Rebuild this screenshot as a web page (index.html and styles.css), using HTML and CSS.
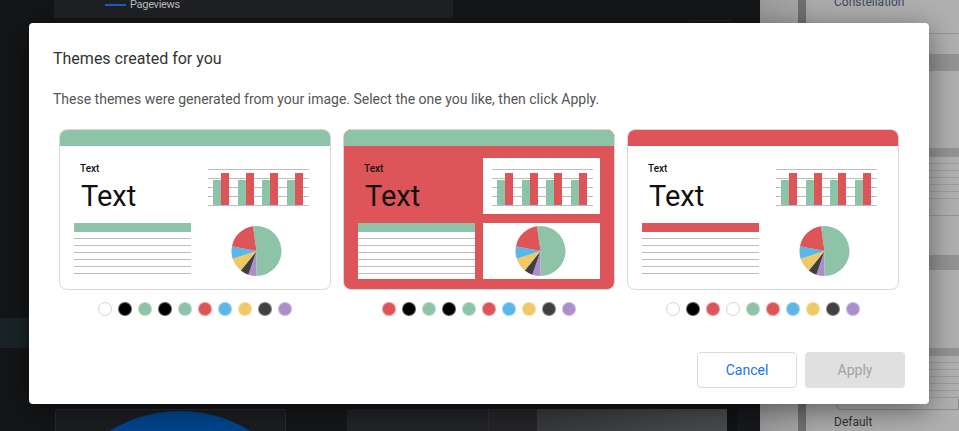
FILE: index.html
```html
<!DOCTYPE html>
<html>
<head>
  <title>Themes created for you</title>
  <link rel="stylesheet" href="styles.css">
</head>
<body>
  <div class="app">
    <div class="rail">
      <div class="rail-stripe"></div>
    </div>

    <div class="canvas">
      <div class="top-row">
        <div class="chart-panel">
          <span class="legend-line"></span>
          <span class="legend-text">Pageviews</span>
        </div>
        <div class="chart-gap">
          <div class="ghost-box"></div>
        </div>
      </div>
      <div class="bottom-row">
        <div class="map-panel">
          <div class="map-circle"></div>
        </div>
        <div class="blk blk-dark"></div>
        <div class="blk blk-a"></div>
        <div class="blk blk-b"></div>
        <div class="blk blk-c"></div>
        <div class="blk blk-d"></div>
        <div class="blk blk-e"></div>
      </div>
    </div>

    <div class="side-panel">
      <div class="side-stripe"></div>
      <div class="props">
        <div class="prop-label">Constellation</div>
        <div class="prop-rule r1"></div>
        <div class="prop-band b1"></div>
        <div class="prop-band b2"></div>
        <div class="prop-lines"></div>
        <div class="prop-rule r2"></div>
        <div class="prop-band b3"></div>
        <div class="prop-band b4"></div>
        <div class="prop-lines"></div>
        <div class="prop-box"></div>
        <div class="prop-label prop-default">Default</div>
      </div>
    </div>
  </div>

  <div class="dialog">
    <h2 class="dialog-title">Themes created for you</h2>
    <p class="dialog-text">These themes were generated from your image. Select the one you like, then click Apply.</p>

    <div class="themes">
      <!-- theme 1 -->
      <div class="theme">
        <div class="card">
          <div class="card-head green"></div>
          <div class="card-body">
            <div class="cell cell-title">
              <span class="t-small">Text</span>
              <span class="t-big">Text</span>
            </div>
            <div class="cell cell-chart">
              <svg width="117" height="56" viewBox="0 0 117 56">
                <g class="grid">
                  <rect x="9" y="11" width="101" height="1"/>
                  <rect x="9" y="20" width="101" height="1"/>
                  <rect x="9" y="29" width="101" height="1"/>
                  <rect x="9" y="38" width="101" height="1"/>
                  <rect x="9" y="47" width="101" height="1"/>
                </g>
                <g class="bars-a">
                  <rect x="14" y="22" width="8" height="25"/>
                  <rect x="39" y="22" width="8" height="25"/>
                  <rect x="63" y="22" width="8" height="25"/>
                  <rect x="88" y="22" width="8" height="25"/>
                </g>
                <g class="bars-b">
                  <rect x="22" y="15" width="8" height="32"/>
                  <rect x="47" y="15" width="8" height="32"/>
                  <rect x="71" y="15" width="8" height="32"/>
                  <rect x="96" y="15" width="8" height="32"/>
                </g>
              </svg>
            </div>
            <div class="cell cell-table">
              <div class="table-head green"></div>
              <div class="table-lines"></div>
            </div>
            <div class="cell cell-pie">
              <svg width="117" height="56" viewBox="0 0 117 56">
                <path class="s-green" d="M57.5 28 L54.02 3.24 A25 25 0 1 1 57.5 53 Z"/>
                <path class="s-purple" d="M57.5 28 L57.5 53 A25 25 0 0 1 49.36 51.64 Z"/>
                <path class="s-dark" d="M57.5 28 L49.36 51.64 A25 25 0 0 1 41.77 47.43 Z"/>
                <path class="s-yellow" d="M57.5 28 L41.77 47.43 A25 25 0 0 1 33.72 35.73 Z"/>
                <path class="s-blue" d="M57.5 28 L33.72 35.73 A25 25 0 0 1 32.96 23.23 Z"/>
                <path class="s-red" d="M57.5 28 L32.96 23.23 A25 25 0 0 1 54.02 3.24 Z"/>
              </svg>
            </div>
          </div>
        </div>
        <div class="swatches">
          <span class="dot white"></span>
          <span class="dot black"></span>
          <span class="dot green"></span>
          <span class="dot black"></span>
          <span class="dot green"></span>
          <span class="dot red"></span>
          <span class="dot blue"></span>
          <span class="dot yellow"></span>
          <span class="dot dark"></span>
          <span class="dot purple"></span>
        </div>
      </div>

      <!-- theme 2 -->
      <div class="theme">
        <div class="card card-filled">
          <div class="card-head green"></div>
          <div class="card-body">
            <div class="cell cell-title">
              <span class="t-small">Text</span>
              <span class="t-big">Text</span>
            </div>
            <div class="cell cell-chart">
              <svg width="117" height="56" viewBox="0 0 117 56">
                <g class="grid">
                  <rect x="9" y="11" width="101" height="1"/>
                  <rect x="9" y="20" width="101" height="1"/>
                  <rect x="9" y="29" width="101" height="1"/>
                  <rect x="9" y="38" width="101" height="1"/>
                  <rect x="9" y="47" width="101" height="1"/>
                </g>
                <g class="bars-a">
                  <rect x="14" y="22" width="8" height="25"/>
                  <rect x="39" y="22" width="8" height="25"/>
                  <rect x="63" y="22" width="8" height="25"/>
                  <rect x="88" y="22" width="8" height="25"/>
                </g>
                <g class="bars-b">
                  <rect x="22" y="15" width="8" height="32"/>
                  <rect x="47" y="15" width="8" height="32"/>
                  <rect x="71" y="15" width="8" height="32"/>
                  <rect x="96" y="15" width="8" height="32"/>
                </g>
              </svg>
            </div>
            <div class="cell cell-table">
              <div class="table-head green"></div>
              <div class="table-lines"></div>
            </div>
            <div class="cell cell-pie">
              <svg width="117" height="56" viewBox="0 0 117 56">
                <path class="s-green" d="M57.5 28 L54.02 3.24 A25 25 0 1 1 57.5 53 Z"/>
                <path class="s-purple" d="M57.5 28 L57.5 53 A25 25 0 0 1 49.36 51.64 Z"/>
                <path class="s-dark" d="M57.5 28 L49.36 51.64 A25 25 0 0 1 41.77 47.43 Z"/>
                <path class="s-yellow" d="M57.5 28 L41.77 47.43 A25 25 0 0 1 33.72 35.73 Z"/>
                <path class="s-blue" d="M57.5 28 L33.72 35.73 A25 25 0 0 1 32.96 23.23 Z"/>
                <path class="s-red" d="M57.5 28 L32.96 23.23 A25 25 0 0 1 54.02 3.24 Z"/>
              </svg>
            </div>
          </div>
        </div>
        <div class="swatches">
          <span class="dot red"></span>
          <span class="dot black"></span>
          <span class="dot green"></span>
          <span class="dot black"></span>
          <span class="dot green"></span>
          <span class="dot red"></span>
          <span class="dot blue"></span>
          <span class="dot yellow"></span>
          <span class="dot dark"></span>
          <span class="dot purple"></span>
        </div>
      </div>

      <!-- theme 3 -->
      <div class="theme">
        <div class="card">
          <div class="card-head red"></div>
          <div class="card-body">
            <div class="cell cell-title">
              <span class="t-small">Text</span>
              <span class="t-big">Text</span>
            </div>
            <div class="cell cell-chart">
              <svg width="117" height="56" viewBox="0 0 117 56">
                <g class="grid">
                  <rect x="9" y="11" width="101" height="1"/>
                  <rect x="9" y="20" width="101" height="1"/>
                  <rect x="9" y="29" width="101" height="1"/>
                  <rect x="9" y="38" width="101" height="1"/>
                  <rect x="9" y="47" width="101" height="1"/>
                </g>
                <g class="bars-a">
                  <rect x="14" y="22" width="8" height="25"/>
                  <rect x="39" y="22" width="8" height="25"/>
                  <rect x="63" y="22" width="8" height="25"/>
                  <rect x="88" y="22" width="8" height="25"/>
                </g>
                <g class="bars-b">
                  <rect x="22" y="15" width="8" height="32"/>
                  <rect x="47" y="15" width="8" height="32"/>
                  <rect x="71" y="15" width="8" height="32"/>
                  <rect x="96" y="15" width="8" height="32"/>
                </g>
              </svg>
            </div>
            <div class="cell cell-table">
              <div class="table-head red"></div>
              <div class="table-lines"></div>
            </div>
            <div class="cell cell-pie">
              <svg width="117" height="56" viewBox="0 0 117 56">
                <path class="s-green" d="M57.5 28 L54.02 3.24 A25 25 0 1 1 57.5 53 Z"/>
                <path class="s-purple" d="M57.5 28 L57.5 53 A25 25 0 0 1 49.36 51.64 Z"/>
                <path class="s-dark" d="M57.5 28 L49.36 51.64 A25 25 0 0 1 41.77 47.43 Z"/>
                <path class="s-yellow" d="M57.5 28 L41.77 47.43 A25 25 0 0 1 33.72 35.73 Z"/>
                <path class="s-blue" d="M57.5 28 L33.72 35.73 A25 25 0 0 1 32.96 23.23 Z"/>
                <path class="s-red" d="M57.5 28 L32.96 23.23 A25 25 0 0 1 54.02 3.24 Z"/>
              </svg>
            </div>
          </div>
        </div>
        <div class="swatches">
          <span class="dot white"></span>
          <span class="dot black"></span>
          <span class="dot red"></span>
          <span class="dot white"></span>
          <span class="dot green"></span>
          <span class="dot red"></span>
          <span class="dot blue"></span>
          <span class="dot yellow"></span>
          <span class="dot dark"></span>
          <span class="dot purple"></span>
        </div>
      </div>
    </div>

    <div class="dialog-actions">
      <button class="btn btn-cancel">Cancel</button>
      <button class="btn btn-apply" disabled>Apply</button>
    </div>
  </div>
</body>
</html>
```

FILE: styles.css
```css
body {
  margin: 0;
  width: 959px;
  height: 431px;
  overflow: hidden;
  position: relative;
  font-family: Roboto, "Liberation Sans", Arial, sans-serif;
  background: #151619;
}

/* ---- dimmed app behind the dialog ---- */
.app {
  display: flex;
  height: 431px;
}
.rail {
  width: 54px;
  background: #141517;
}
.rail-stripe {
  margin-top: 318px;
  height: 30px;
  background: #1a2327;
}
.canvas {
  width: 706px;
  display: flex;
  flex-direction: column;
  justify-content: space-between;
  background: #151618;
}
.top-row {
  display: flex;
  height: 40px;
}
.chart-panel {
  width: 399px;
  height: 18px;
  background: #1f2024;
  display: flex;
  align-items: flex-start;
  padding-left: 51px;
  box-sizing: border-box;
}
.legend-line {
  width: 21px;
  height: 2px;
  margin-top: 4px;
  background: #1f5cb8;
  margin-right: 4px;
}
.legend-text {
  font-size: 11px;
  line-height: 11px;
  margin-top: -1px;
  color: #b9bbc0;
  letter-spacing: -0.3px;
}
.chart-gap {
  flex: 1;
  padding: 20px 27px 0 0;
}
.ghost-box {
  height: 20px;
  border: 1px solid #222326;
  border-radius: 4px;
  margin-left: 234px;
}
.bottom-row {
  display: flex;
  height: 22px;
}
.map-panel {
  width: 229px;
  margin-left: 1px;
  background: #1c1d21;
  border: 1px solid #2a2b2f;
  border-bottom: none;
  border-radius: 3px 3px 0 0;
  overflow: hidden;
}
.map-circle {
  width: 268px;
  height: 268px;
  margin: 1px 0 0 -10px;
  border-radius: 50%;
  background: #00458e;
}
.blk-dark { width: 61px; }
.blk-a { width: 141px; background: #222326; }
.blk-b { width: 48px; background: #242528; border-left: 1px solid #2d2e31; }
.blk-c { width: 190px; background: linear-gradient(90deg, #37383b, #4a4b4d); }
.blk-d { width: 10px; background: #111214; }
.blk-e { flex: 1; background: #17181b; }

.side-panel {
  flex: 1;
  display: flex;
  background: linear-gradient(90deg, #9a9a9a, #ababab 30%, #b0b0b0);
}
.side-stripe {
  width: 8px;
  margin-left: 38px;
  background: #6f6f6f;
}
.props {
  flex: 1;
  display: flex;
  flex-direction: column;
}
.prop-label {
  font-size: 12px;
  line-height: 12px;
  color: #3c4859;
  padding-left: 28px;
  margin-top: -4px;
}
.prop-rule {
  height: 1px;
  background: #969696;
}
.r1 { margin-top: 25px; }
.r2 { margin-top: 16px; }
.prop-band { background: #939393; }
.b1 { margin-top: 20px; height: 17px; }
.b2 { margin-top: 77px; height: 9px; }
.b3 { margin-top: 39px; height: 15px; }
.b4 { margin-top: 78px; height: 8px; }
.prop-lines {
  margin-top: 6px;
  height: 36px;
  background: repeating-linear-gradient(to bottom, #9c9c9c 0 1px, transparent 1px 7px);
}
.prop-box {
  height: 10px;
  margin: 1px 0 0 29px;
  border: 1px solid #8d8d8d;
  border-top: none;
  border-radius: 0 0 0 8px;
}
.prop-default {
  margin-top: 6px;
  color: #333;
}

/* ---- dialog ---- */
.dialog {
  position: absolute;
  left: 29px;
  top: 23px;
  width: 900px;
  height: 381px;
  box-sizing: border-box;
  padding: 24px 24px 16px;
  background: white;
  border-radius: 4px;
  box-shadow: 0 6px 28px rgba(0,0,0,0.45);
  display: flex;
  flex-direction: column;
}
.dialog-title {
  margin: 0 0 18px 0;
  font-size: 16px;
  line-height: 24px;
  font-weight: 400;
  color: #333;
}
.dialog-text {
  margin: 0 0 20px 0;
  font-size: 14px;
  line-height: 20px;
  color: #555;
}
.themes {
  display: flex;
}
.theme {
  width: 284px;
  padding: 0 6px;
  box-sizing: border-box;
}
.card {
  height: 161px;
  border: 1px solid #d8d8d8;
  border-radius: 8px;
  overflow: hidden;
  background: white;
  box-sizing: border-box;
}
.card-filled {
  background: #dd5558;
}
.card-head {
  height: 16px;
}
.card-body {
  display: grid;
  grid-template-columns: 117px 117px;
  grid-template-rows: 56px 56px;
  column-gap: 8px;
  row-gap: 9px;
  padding: 12px 14px 10px;
}
.cell-chart,
.cell-table,
.cell-pie {
  background: white;
}
.cell-chart svg,
.cell-pie svg {
  display: block;
}
.cell-title {
  padding: 5px 0 0 6px;
  color: #111;
}
.t-small {
  display: block;
  font-size: 10px;
  line-height: 12px;
  font-weight: 500;
}
.t-big {
  display: block;
  margin-top: 5px;
  font-size: 29px;
  line-height: 32px;
  padding-left: 1px;
}
.table-head {
  height: 9px;
}
.table-lines {
  margin-top: 6px;
  height: 36px;
  background: repeating-linear-gradient(to bottom, #bdbdbd 0 1px, transparent 1px 7px);
}
.grid rect { fill: #bdbdbd; }
.bars-a rect { fill: #8dc4a8; }
.bars-b rect { fill: #dd5558; }
.s-green { fill: #8dc4a8; }
.s-purple { fill: #ab8fca; }
.s-dark { fill: #404040; }
.s-yellow { fill: #f0c966; }
.s-blue { fill: #5cb6e7; }
.s-red { fill: #dd5558; }

.swatches {
  display: flex;
  justify-content: center;
  gap: 6px;
  margin-top: 12px;
}
.dot {
  width: 14px;
  height: 14px;
  border-radius: 50%;
  box-sizing: border-box;
  border: 1px solid rgba(255,255,255,0.35);
}

.green { background: #8dc4a8; }
.red { background: #dd5558; }
.white { background: white; border-color: #d6d6d6; }
.black { background: #000; }
.blue { background: #5cb6e7; }
.yellow { background: #f0c966; }
.dark { background: #404040; }
.purple { background: #ab8fca; }

.dialog-actions {
  margin-top: auto;
  display: flex;
  justify-content: flex-end;
  gap: 8px;
}
.btn {
  width: 100px;
  height: 36px;
  border-radius: 4px;
  font-family: Roboto, sans-serif;
  font-size: 14px;
  cursor: pointer;
}
.btn-cancel {
  background: white;
  border: 1px solid #dadce0;
  color: #1a73e8;
}
.btn-apply {
  background: #e0e0e0;
  border: none;
  color: #a2a2a2;
}
```
